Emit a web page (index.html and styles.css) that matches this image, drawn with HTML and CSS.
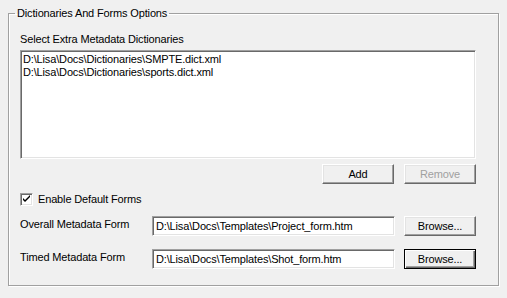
FILE: index.html
```html
<!DOCTYPE html>
<html lang="en">
<head>
  <meta charset="UTF-8">
  <title>Dictionaries And Forms Options</title>
  <link rel="stylesheet" href="styles.css">
</head>
<body>
  <fieldset class="group">
    <legend>Dictionaries And Forms Options</legend>

    <div class="caption">Select Extra Metadata Dictionaries</div>
    <div class="listbox">
      <div class="item">D:\Lisa\Docs\Dictionaries\SMPTE.dict.xml</div>
      <div class="item">D:\Lisa\Docs\Dictionaries\sports.dict.xml</div>
    </div>

    <div class="list-buttons">
      <button class="btn">Add</button>
      <button class="btn" disabled>Remove</button>
    </div>

    <label class="check">
      <span class="box">
        <svg width="9" height="9" viewBox="0 0 9 9">
          <path d="M1 3v2l2 2l5-5v-2l-5 5z" fill="#000"/>
        </svg>
      </span>
      Enable Default Forms
    </label>

    <div class="form-row">
      <span class="row-label">Overall Metadata Form</span>
      <input class="path" type="text" value="D:\Lisa\Docs\Templates\Project_form.htm">
      <button class="btn">Browse...</button>
    </div>

    <div class="form-row">
      <span class="row-label">Timed Metadata Form</span>
      <input class="path" type="text" value="D:\Lisa\Docs\Templates\Shot_form.htm">
      <button class="btn default">Browse...</button>
    </div>
  </fieldset>
</body>
</html>
```

FILE: styles.css
```css
body {
  margin: 0;
  padding: 7px 8px 0 8px;
  background: #f0f0f0;
  font-family: "Liberation Sans", Arial, sans-serif;
  font-size: 11px;
  letter-spacing: -0.15px;
  color: #000;
  height: 298px;
  box-sizing: border-box;
  overflow: hidden;
}

.group {
  margin: 0;
  padding: 0 0 0 11px;
  width: 491px;
  height: 279px;
  box-sizing: border-box;
  border: 1px solid #a0a0a0;
  box-shadow: 1px 1px 0 #fff, inset 1px 1px 0 #fff;
}

.group legend {
  padding: 0 2px;
  margin-left: -5px;
  line-height: 13px;
}

.caption {
  margin-top: 13px;
  line-height: 13px;
}

.listbox {
  margin-top: 4px;
  width: 456px;
  height: 109px;
  box-sizing: border-box;
  background: #fff;
  border: 1px solid;
  border-color: #a0a0a0 #fff #fff #a0a0a0;
  box-shadow: inset 1px 1px 0 #696969, inset -1px -1px 0 #e3e3e3;
  padding: 2px 2px;
}

.item {
  line-height: 13px;
  white-space: nowrap;
}

.list-buttons {
  display: flex;
  justify-content: flex-end;
  gap: 10px;
  width: 456px;
  margin-top: 5px;
}

.btn {
  width: 72px;
  height: 20px;
  padding: 0;
  font-family: inherit;
  font-size: 11px;
  letter-spacing: inherit;
  color: #000;
  background: #f0f0f0;
  border: 1px solid;
  border-color: #fff #696969 #696969 #fff;
  box-shadow: inset -1px -1px 0 #a0a0a0, inset 1px 1px 0 #e3e3e3;
  border-radius: 0;
}

.btn:disabled {
  color: #a0a0a0;
}

.btn.default {
  border-color: #000;
  box-shadow: inset 1px 1px 0 #fff, inset -1px -1px 0 #696969, inset -2px -2px 0 #a0a0a0;
}

.check {
  display: flex;
  align-items: center;
  gap: 5px;
  margin-top: 9px;
  height: 13px;
  line-height: 13px;
}

.check .box {
  width: 13px;
  height: 13px;
  box-sizing: border-box;
  background: #fff;
  border: 1px solid;
  border-color: #a0a0a0 #fff #fff #a0a0a0;
  box-shadow: inset 1px 1px 0 #696969, inset -1px -1px 0 #e3e3e3;
  display: flex;
  align-items: center;
  justify-content: center;
}

.form-row {
  display: flex;
  align-items: center;
  margin-top: 10px;
  height: 20px;
}

.form-row + .form-row {
  margin-top: 13px;
}

.row-label {
  width: 132px;
  line-height: 13px;
  margin-top: -3px;
}

.path {
  width: 243px;
  height: 20px;
  box-sizing: border-box;
  margin: 0 9px 0 0;
  padding: 0 3px;
  font-family: inherit;
  font-size: 11px;
  letter-spacing: inherit;
  color: #000;
  background: #fff;
  border: 1px solid;
  border-color: #a0a0a0 #fff #fff #a0a0a0;
  box-shadow: inset 1px 1px 0 #696969, inset -1px -1px 0 #e3e3e3;
  outline: none;
}
```
